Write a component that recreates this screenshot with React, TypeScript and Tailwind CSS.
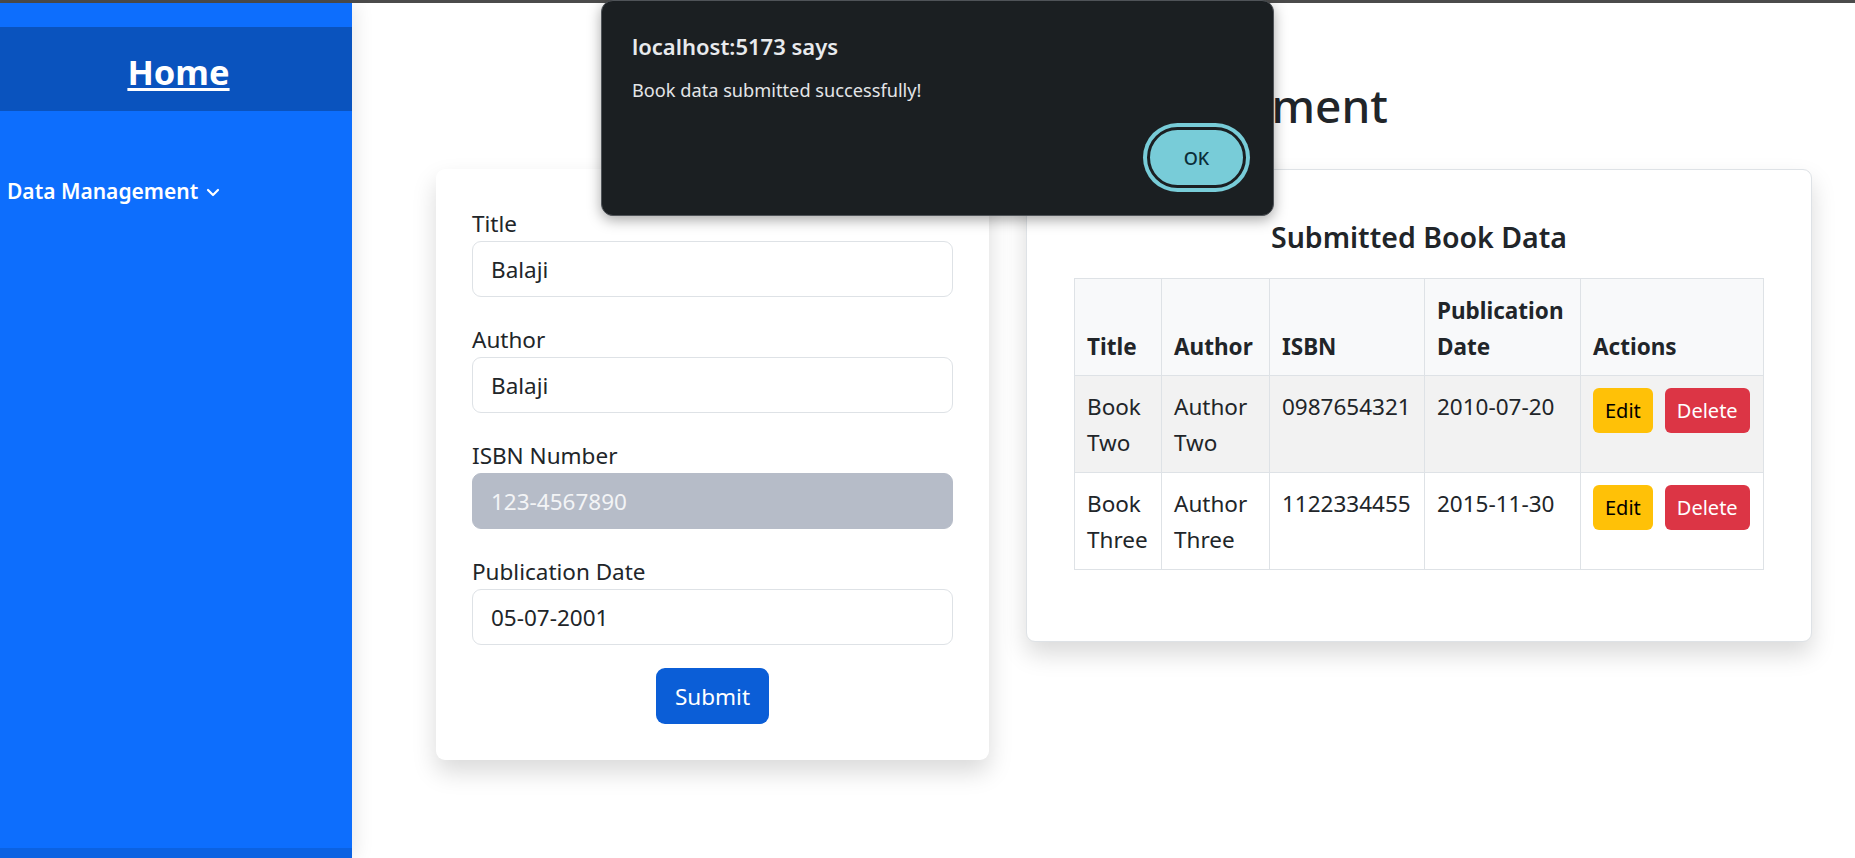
import React from "react";

function Field({ label, value, gray, last }: { label: string; value: string; gray?: boolean; last?: boolean }) {
  return (
    <div className={last ? "mb-[23px]" : "mb-[24px]"}>
      <div className="h-[36px] leading-[36px] text-[22.5px] pt-[1px]">{label}</div>
      <div
        className={
          "h-[56px] rounded-[9px] border px-[18px] flex items-center text-[22.5px] leading-[36px] pt-[1px] " +
          (gray ? "bg-[#b6bcc8] border-[#b6bcc8] text-[#f3f4f6]" : "bg-white border-[#dee2e6] text-[#212529]")
        }
      >
        {value}
      </div>
    </div>
  );
}

const rows = [
  { t: "Book Two", a: "Author Two", i: "0987654321", d: "2010-07-20" },
  { t: "Book Three", a: "Author Three", i: "1122334455", d: "2015-11-30" },
];

const th = "border border-[#dee2e6] px-[12px] pt-[14px] pb-[10px] text-left align-bottom font-bold";
const td = "border border-[#dee2e6] px-[12px] pt-[13px] pb-[11px] align-top";

export default function App() {
  return (
    <div className="relative w-full h-[858px] overflow-hidden bg-white font-['Noto_Sans',sans-serif] text-[#212529]">
      <div className="h-[3px] bg-[#4b4b4b]" />
      <div className="flex h-[855px]">
        <aside className="relative z-10 w-[352px] shrink-0 bg-[#0d6efd] flex flex-col shadow-[4px_0_18px_rgba(0,0,0,0.09)]">
          <div className="mt-[24px] h-[84px] bg-[#0a53be] flex items-center justify-center pt-[4px] pl-[5px]">
            <span className="text-[34.5px] leading-[43px] font-bold text-white underline decoration-[3px] underline-offset-[3px]">
              Home
            </span>
          </div>
          <div className="mt-[64px] flex items-center pl-[7px] text-white font-semibold text-[21px] leading-[33px]">
            <span>Data Management</span>
            <svg className="ml-[8px] mt-[2px]" width="14" height="9" viewBox="0 0 14 9" fill="none">
              <polyline points="2,2 7,7 12,2" stroke="white" strokeWidth="2.2" strokeLinecap="round" strokeLinejoin="round" />
            </svg>
          </div>
          <div className="flex-1" />
          <div className="h-[10px] bg-[#0b62e2]" />
        </aside>

        <main className="flex-1 flex flex-col pl-[84px] pr-[43px]">
          <h2 className="mt-[75px] text-center text-[46px] leading-[54px] font-medium pr-[7px]">Book Data Management</h2>
          <div className="mt-[37px] flex items-start gap-[37px]">
            <div className="w-[553px] shrink-0 rounded-[9px] bg-white shadow-[0_12px_24px_rgba(0,0,0,0.15)] p-[36px]">
              <Field label="Title" value="Balaji" />
              <Field label="Author" value="Balaji" />
              <Field label="ISBN Number" value="123-4567890" gray />
              <Field label="Publication Date" value="05-07-2001" last />
              <div className="flex justify-center">
                <button className="h-[56px] px-[19px] rounded-[9px] bg-[#0b5ed7] text-white text-[22.5px] leading-[36px] pt-[1px]">
                  Submit
                </button>
              </div>
            </div>

            <div className="flex-1 rounded-[9px] border border-[#dee2e6] bg-white shadow-[0_12px_24px_rgba(0,0,0,0.15)] px-[47px] pt-[49px] pb-[71px]">
              <h5 className="text-center text-[28.5px] leading-[36px] font-semibold mb-[23px]">Submitted Book Data</h5>
              <table className="w-full table-fixed border-collapse text-[22.5px] leading-[36px]">
                <thead>
                  <tr className="bg-[#f8f9fa]">
                    <th className={"w-[87px] " + th}>Title</th>
                    <th className={"w-[108px] " + th}>Author</th>
                    <th className={"w-[155px] " + th}>ISBN</th>
                    <th className={"w-[156px] " + th}>Publication Date</th>
                    <th className={"w-[183px] " + th}>Actions</th>
                  </tr>
                </thead>
                <tbody>
                  {rows.map((r, idx) => (
                    <tr key={idx} className={idx === 0 ? "bg-[#f2f2f2]" : "bg-white"}>
                      <td className={td}>{r.t}</td>
                      <td className={td}>{r.a}</td>
                      <td className={td + " whitespace-nowrap"}>{r.i}</td>
                      <td className={td + " whitespace-nowrap"}>{r.d}</td>
                      <td className="border border-[#dee2e6] p-[12px] align-top">
                        <div className="flex gap-[12px]">
                          <button className="h-[45px] px-[12px] rounded-[6px] bg-[#ffc107] text-black text-[20px] leading-[31px]">
                            Edit
                          </button>
                          <button className="h-[45px] px-[12px] rounded-[6px] bg-[#dc3545] text-white text-[20px] leading-[31px]">
                            Delete
                          </button>
                        </div>
                      </td>
                    </tr>
                  ))}
                </tbody>
              </table>
            </div>
          </div>
        </main>
      </div>

      <div className="absolute left-[601px] top-0 z-20 w-[673px] h-[216px] rounded-[12px] bg-[#1b1f22] border border-[#4f5358] shadow-[0_4px_14px_rgba(0,0,0,0.35)] pl-[30px] pt-[31px]">
        <div className="text-[22px] leading-[28px] font-semibold text-[#e8eaed]">localhost:5173 says</div>
        <div className="mt-[18px] text-[18.2px] leading-[24px] text-[#e3e5e8]">Book data submitted successfully!</div>
        <div className="mt-[25px] flex justify-end pr-[27px]">
          <button className="w-[99px] h-[61px] rounded-full bg-[#78ccd8] border-[3px] border-[#1b1f22] shadow-[0_0_0_4px_#78ccd8] text-[18px] leading-[24px] text-[#0b2e38] font-medium">
            OK
          </button>
        </div>
      </div>
    </div>
  );
}
